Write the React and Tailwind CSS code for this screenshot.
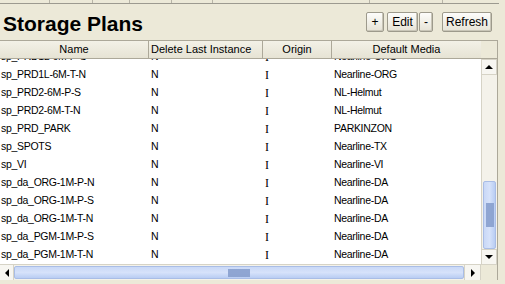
import React from 'react';

const rows = [
  ['sp_PRD1L-6M-P-S', 'N', 'I', 'Nearline-ORG'],
  ['sp_PRD1L-6M-T-N', 'N', 'I', 'Nearline-ORG'],
  ['sp_PRD2-6M-P-S', 'N', 'I', 'NL-Helmut'],
  ['sp_PRD2-6M-T-N', 'N', 'I', 'NL-Helmut'],
  ['sp_PRD_PARK', 'N', 'I', 'PARKINZON'],
  ['sp_SPOTS', 'N', 'I', 'Nearline-TX'],
  ['sp_VI', 'N', 'I', 'Nearline-VI'],
  ['sp_da_ORG-1M-P-N', 'N', 'I', 'Nearline-DA'],
  ['sp_da_ORG-1M-P-S', 'N', 'I', 'Nearline-DA'],
  ['sp_da_ORG-1M-T-N', 'N', 'I', 'Nearline-DA'],
  ['sp_da_PGM-1M-P-S', 'N', 'I', 'Nearline-DA'],
  ['sp_da_PGM-1M-T-N', 'N', 'I', 'Nearline-DA'],
  ['sp_da_PGM-6M-P-S', 'N', 'I', 'Nearline-DA'],
];

const Btn = ({ children, className = '' }) => (
  <button className={`h-[20px] border border-[#9d9a8c] rounded-[2px] bg-gradient-to-b from-[#fdfdfb] to-[#e6e3d6] shadow-[inset_-1px_-1px_0_#c9c6b8] text-[12px] text-black leading-none ${className}`}>
    {children}
  </button>
);

const Grip = ({ vertical }) => (
  <div
    className={vertical ? 'w-[8px] h-[24px]' : 'w-[22px] h-[8px]'}
    style={{
      backgroundImage: 'radial-gradient(#8aa1cf 0.7px, transparent 0.8px)',
      backgroundSize: '2px 2px',
    }}
  />
);

const Triangle = ({ dir }) => {
  const pts = {
    up: '0,5 4,1 8,5',
    down: '0,1 4,5 8,1',
    left: '5,0 1,4 5,8',
    right: '1,0 5,4 1,8',
  }[dir];
  const vert = dir === 'up' || dir === 'down';
  return (
    <svg width={vert ? 8 : 6} height={vert ? 6 : 8} viewBox={vert ? '0 0 8 6' : '0 0 6 8'}>
      <polygon points={pts} fill="#000" />
    </svg>
  );
};

export default function App() {
  return (
    <div className="w-[505px] h-[284px] bg-[#ece9d8] overflow-hidden flex flex-col" style={{ fontFamily: '"Liberation Sans", Arial, sans-serif' }}>
      {/* bottom edge of the panel above */}
      <div className="h-[4px] shrink-0 flex border-b border-[#9c9a90] mr-[6px]">
        {[50, 43, 37, 42, 41, 157, 73].map((w, i) => (
          <div key={i} style={{ width: w }} className="border-r border-[#b7b4a7] h-full" />
        ))}
      </div>

      {/* title row */}
      <div className="h-[36px] shrink-0 flex items-center pl-[3px] pr-[13px]">
        <h1 className="text-[21px] font-bold text-black leading-none mt-[2px]">Storage Plans</h1>
        <div className="ml-auto flex items-center">
          <Btn className="w-[18px]">+</Btn>
          <Btn className="w-[31px] ml-[3px]">Edit</Btn>
          <Btn className="w-[14px] ml-[1px]">-</Btn>
          <Btn className="w-[50px] ml-[9px]">Refresh</Btn>
        </div>
      </div>

      {/* table */}
      <div className="h-[240px] shrink-0 flex flex-col w-[498px] border-t border-r border-[#aca899]">
        <div className="h-[223px] flex">
          <div className="w-[481px] flex flex-col">
            {/* header */}
            <div className="h-[18px] shrink-0 flex text-[11px] text-black bg-gradient-to-b from-[#f3f1e7] to-[#e6e3d4] border-b border-[#aca899]">
              <div className="w-[149px] border-r border-[#aca899] flex items-center justify-center">Name</div>
              <div className="w-[114px] border-r border-[#aca899] flex items-center pl-[2px]">Delete Last Instance</div>
              <div className="w-[69px] border-r border-[#aca899] flex items-center justify-center">Origin</div>
              <div className="flex-1 flex items-center justify-center">Default Media</div>
            </div>
            {/* body */}
            <div className="h-[205px] bg-white overflow-hidden">
              <div className="mt-[-11px]">
                {rows.map((r, i) => (
                  <div key={i} className="h-[18px] flex items-center text-[10.5px] text-black tracking-[-0.3px]">
                    <div className="w-[149px] pl-[1px]">{r[0]}</div>
                    <div className="w-[114px] pl-[2px]">{r[1]}</div>
                    <div className="w-[69px] pl-[2px] text-[12px] leading-none" style={{ fontFamily: '"Liberation Serif", serif' }}>{r[2]}</div>
                    <div className="flex-1 pl-[2px]">{r[3]}</div>
                  </div>
                ))}
              </div>
            </div>
          </div>
          {/* vertical scrollbar */}
          <div className="w-[16px] flex flex-col bg-[#f4f2ea]">
            <div className="h-[18px] shrink-0 bg-[#ece9d8] border-b border-[#aca899]" />
            <div className="h-[16px] shrink-0 flex items-center justify-center bg-[#f7f6f1] border border-[#d6d3c6]">
              <Triangle dir="up" />
            </div>
            <div className="flex-1 flex flex-col border-l border-[#d6d3c6]">
              <div className="h-[106px]" />
              <div className="h-[68px] mx-[1px] rounded-[2px] border border-[#a9bde6] bg-gradient-to-r from-[#c9d8f6] via-[#d6e2fa] to-[#b9cdf3] flex items-center justify-center">
                <Grip vertical />
              </div>
              <div className="flex-1" />
            </div>
            <div className="h-[16px] shrink-0 flex items-center justify-center bg-[#f7f6f1] border border-[#d6d3c6]">
              <Triangle dir="down" />
            </div>
          </div>
        </div>
        {/* horizontal scrollbar */}
        <div className="h-[16px] shrink-0 flex bg-[#f4f2ea] border-t border-[#d6d3c6]">
          <div className="w-[14px] flex items-center justify-center bg-[#f7f6f1] border-r border-[#d6d3c6]">
            <Triangle dir="left" />
          </div>
          <div className="w-[450px] my-[1px] rounded-[2px] border border-[#a9bde6] bg-gradient-to-b from-[#c9d8f6] via-[#d6e2fa] to-[#b9cdf3] flex items-center justify-center">
            <Grip />
          </div>
          <div className="w-[17px] flex items-center justify-center bg-[#f7f6f1] border-x border-[#d6d3c6]">
            <Triangle dir="right" />
          </div>
          <div className="flex-1 bg-[#ece9d8]" />
        </div>
      </div>
    </div>
  );
}
